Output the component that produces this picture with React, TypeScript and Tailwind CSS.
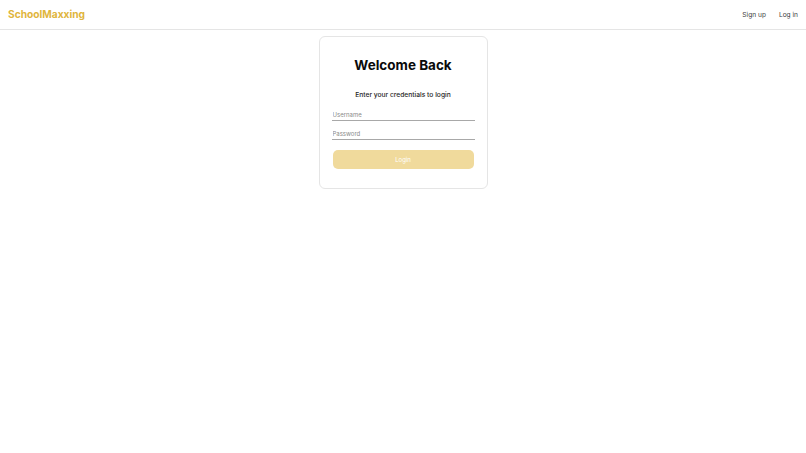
import { useState } from 'react';

export default function App() {
  const [username, setUsername] = useState('');
  const [password, setPassword] = useState('');
  const canSubmit = username.length > 0 && password.length > 0;

  return (
    <div className="min-h-screen bg-white font-['Inter',sans-serif] text-neutral-900">
      <header className="flex h-[30px] items-center justify-between border-b border-neutral-200 px-2">
        <span className="text-[10.2px] font-bold text-[#dfb53c]">SchoolMaxxing</span>
        <nav className="flex items-center gap-[13px] pt-[2px] text-[6.6px] text-neutral-700">
          <a href="#">Sign up</a>
          <a href="#">Log in</a>
        </nav>
      </header>

      <main className="flex justify-center pt-[6px]">
        <div className="w-[169px] rounded-md border border-neutral-200 px-3 pt-[20px] pb-[19px]">
          <h1 className="text-center text-[13.5px] leading-[17px] font-bold text-neutral-950">Welcome Back</h1>
          <p className="mt-[16px] text-center text-[6.7px] leading-[10px] font-medium text-neutral-800">
            Enter your credentials to login
          </p>
          <div className="mt-[9px] flex flex-col gap-[7px]">
            <input
              value={username}
              onChange={(e) => setUsername(e.target.value)}
              placeholder="Username"
              className="h-[12px] w-full border-b border-[#a8a8a8] px-[1px] text-[6px] outline-none placeholder:text-[#8a8a8a]"
            />
            <input
              type="password"
              value={password}
              onChange={(e) => setPassword(e.target.value)}
              placeholder="Password"
              className="h-[12px] w-full border-b border-[#a8a8a8] px-[1px] text-[6px] outline-none placeholder:text-[#8a8a8a]"
            />
          </div>
          <div className="mt-[10px] px-[1px]">
            <button
              type="button"
              disabled={!canSubmit}
              className="block h-[19px] w-full rounded-[5px] bg-[#f0da9c] text-[6px] text-white"
            >
              Login
            </button>
          </div>
        </div>
      </main>
    </div>
  );
}
